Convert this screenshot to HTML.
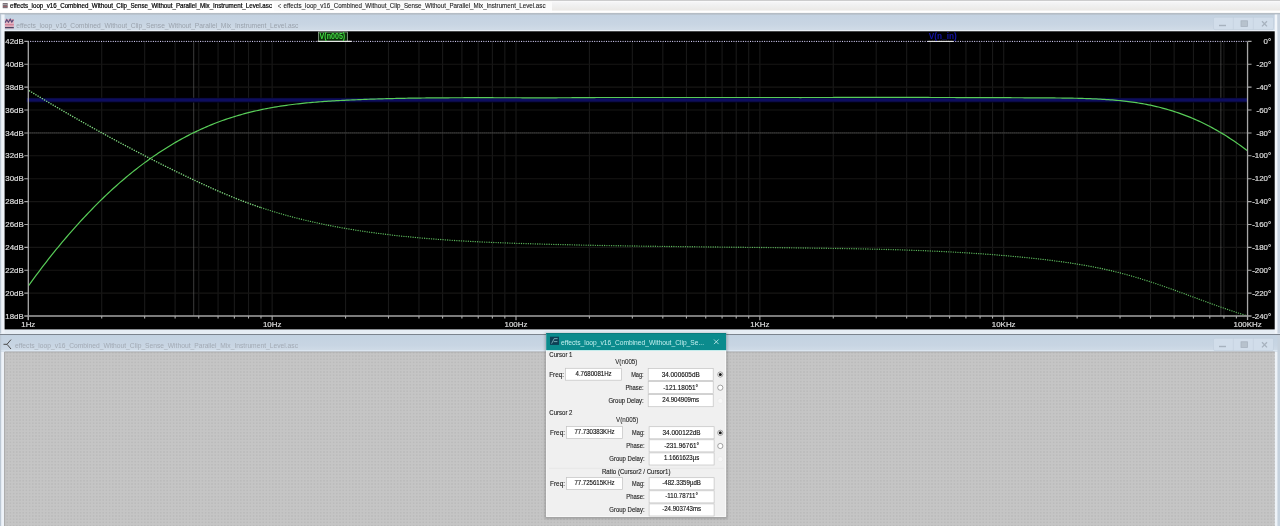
<!DOCTYPE html>
<html lang="en"><head><meta charset="utf-8"><title>LTspice</title>
<style>html,body{margin:0;padding:0;background:#c2c2c2;overflow:hidden}svg{display:block}text{opacity:0.999}</style>
</head><body>
<svg width="1280" height="526" viewBox="0 0 1280 526">
<defs>
<linearGradient id="gTitle" x1="0" y1="0" x2="0" y2="1"><stop offset="0" stop-color="#c3d2e1"/><stop offset="0.6" stop-color="#c8d5e3"/><stop offset="1" stop-color="#d2dde8"/></linearGradient>
<linearGradient id="gTab" x1="0" y1="0" x2="0" y2="1"><stop offset="0.15" stop-color="#f5f5f7"/><stop offset="0.45" stop-color="#efefef"/><stop offset="0.8" stop-color="#ebe9e6"/></linearGradient>
<linearGradient id="gTabEdge" x1="0" y1="0" x2="0" y2="1"><stop offset="0" stop-color="#f4f4f4"/><stop offset="0.3" stop-color="#b4bcc4"/><stop offset="0.7" stop-color="#b9c3cd"/><stop offset="1" stop-color="#c3d2e1"/></linearGradient>
<pattern id="dots" width="3.2" height="3.2" patternUnits="userSpaceOnUse"><rect x="0" y="0" width="1.6" height="1.6" fill="#bbbbbb"/></pattern>
<filter id="b1" x="-20%" y="-20%" width="140%" height="140%"><feGaussianBlur stdDeviation="1"/></filter>
<filter id="bl" filterUnits="userSpaceOnUse" x="0" y="90" width="1280" height="20"><feGaussianBlur stdDeviation="0 0.5"/></filter>
<filter id="b05" x="-5%" y="-50%" width="110%" height="200%"><feGaussianBlur stdDeviation="0.45"/></filter>
<filter id="b07" x="-5%" y="-50%" width="110%" height="200%"><feGaussianBlur stdDeviation="0.6"/></filter>
</defs>
<rect x="0" y="0" width="1280" height="526" fill="#c2c2c2"/>
<rect x="0" y="0" width="1280" height="13.2" fill="url(#gTab)"/>
<rect x="0" y="0" width="552" height="13" fill="#fbfbfb"/>
<rect x="0" y="0" width="274" height="13" fill="#ffffff"/>
<rect x="0" y="0.9" width="1280" height="1" fill="#fafafa"/>
<rect x="0" y="0" width="1280" height="0.9" fill="#c8c8c8"/>
<rect x="0" y="10.6" width="1280" height="2.2" fill="#ffffff"/>
<rect x="0" y="13.3" width="1280" height="321" fill="#e6edf4"/>
<rect x="0" y="13.4" width="1280" height="17.9" fill="url(#gTitle)"/>
<rect x="0" y="12.6" width="1280" height="2.6" fill="url(#gTabEdge)"/>
<rect x="3" y="30.2" width="1273.5" height="1.1" fill="#eef3f8"/>
<rect x="1" y="14.5" width="3.6" height="319" fill="#eef3f9"/>
<rect x="0" y="14.5" width="1.2" height="319" fill="#bcc8d4"/>
<rect x="1274.7" y="14.5" width="2.8" height="319" fill="#f2f6fa"/>
<rect x="1277.5" y="14.5" width="2.5" height="319" fill="#c9d4e0"/>
<rect x="4.6" y="31.3" width="1270.1" height="298.1" fill="#000"/>
<rect x="0" y="335" width="1280" height="192" fill="#e3eaf2"/>
<rect x="0" y="335" width="1280" height="17.2" fill="url(#gTitle)"/>
<rect x="0" y="334" width="1280" height="1" fill="#7c848e"/>
<rect x="0" y="350" width="1280" height="1.6" fill="#dbe6f1"/>
<rect x="1274.7" y="352" width="2.8" height="174" fill="#eef3f8"/>
<rect x="1277.5" y="335" width="2.5" height="191" fill="#c6d2de"/>
<rect x="1" y="352" width="3.6" height="174" fill="#eef3f9"/>
<rect x="0" y="335" width="1.2" height="191" fill="#bcc8d4"/>
<rect x="4.6" y="352.2" width="1270.1" height="174" fill="#c5c5c5"/>
<rect x="4.6" y="352.2" width="1270.1" height="174" fill="url(#dots)"/>
<path d="M4.6 526 V352 H1274.7" stroke="#a8a8a8" stroke-width="1" fill="none"/>
<g font-family="'Liberation Sans', Arial, sans-serif">
<rect x="2.7" y="3" width="5" height="5.2" fill="#7a7278"/><rect x="3" y="4.3" width="4.4" height="0.7" fill="#b9b4b8"/><rect x="3" y="6" width="4.4" height="0.8" fill="#a05a62"/>
<text x="10" y="7.8" font-size="6.4" fill="#000" stroke="#000" stroke-width="0.2" textLength="262" lengthAdjust="spacingAndGlyphs">effects_loop_v16_Combined_Without_Clip_Sense_Without_Parallel_Mix_Instrument_Level.asc</text>
<path d="M281 4.2 L278 6 L281 7.8" stroke="#444" stroke-width="0.7" fill="none"/>
<text x="283.5" y="7.8" font-size="6.4" fill="#222" stroke="#222" stroke-width="0.1" textLength="262" lengthAdjust="spacingAndGlyphs">effects_loop_v16_Combined_Without_Clip_Sense_Without_Parallel_Mix_Instrument_Level.asc</text>
<g filter="url(#b05)"><rect x="4.9" y="19" width="9" height="9.6" fill="#e3b4c2"/><path d="M5.2 22.6 l1.6 -3 l1.6 2.6 l1.8 -3 l1.6 2.8 l1.6 -2.4" stroke="#5a4a78" stroke-width="1.2" fill="none"/><path d="M5 27.6 h8.8" stroke="#4c4464" stroke-width="1.3"/><path d="M5 24.8 h8.8" stroke="#c8607c" stroke-width="0.8"/></g>
<text x="16.3" y="27.6" font-size="7.6" fill="#9aa2ac" textLength="282" lengthAdjust="spacingAndGlyphs" filter="url(#b07)">effects_loop_v16_Combined_Without_Clip_Sense_Without_Parallel_Mix_Instrument_Level.asc</text>
<path d="M11 339.6 L7 344.3 L11 349 M3.5 344.3 L7 344.3" stroke="#4a4a4a" stroke-width="1" fill="none"/>
<text x="15" y="348.2" font-size="7.6" fill="#a2aab4" textLength="283" lengthAdjust="spacingAndGlyphs" filter="url(#b07)">effects_loop_v16_Combined_Without_Clip_Sense_Without_Parallel_Mix_Instrument_Level.asc</text>
</g>
<rect x="1213.5" y="17.2" width="60" height="12.4" rx="1.5" fill="#d1ddea" stroke="#c0cddb" stroke-width="0.6"/><path d="M1233.3 17.2 v12.4 M1253.3 17.2 v12.4" stroke="#c0cddb" stroke-width="0.6"/><path d="M1219 25.5 h7" stroke="#a7b2be" stroke-width="1.4"/><rect x="1241" y="20.8" width="6.4" height="5.6" fill="#b7c2cd" stroke="#a7b2be" stroke-width="0.8"/><path d="M1262 21.2 l5 5.2 m0 -5.2 l-5 5.2" stroke="#a7b2be" stroke-width="1.3"/>
<rect x="1213.5" y="338.2" width="60" height="12.4" rx="1.5" fill="#d1ddea" stroke="#c0cddb" stroke-width="0.6"/><path d="M1233.3 338.2 v12.4 M1253.3 338.2 v12.4" stroke="#c0cddb" stroke-width="0.6"/><path d="M1219 346.5 h7" stroke="#a7b2be" stroke-width="1.4"/><rect x="1241" y="341.8" width="6.4" height="5.6" fill="#b7c2cd" stroke="#a7b2be" stroke-width="0.8"/><path d="M1262 342.2 l5 5.2 m0 -5.2 l-5 5.2" stroke="#a7b2be" stroke-width="1.3"/>
<g id="plot">
<path d="M101.71 41.4 V316.0 M144.65 41.4 V316.0 M175.11 41.4 V316.0 M198.74 41.4 V316.0 M218.05 41.4 V316.0 M234.38 41.4 V316.0 M248.52 41.4 V316.0 M260.99 41.4 V316.0 M272.15 41.4 V316.0 M345.56 41.4 V316.0 M388.50 41.4 V316.0 M418.96 41.4 V316.0 M442.59 41.4 V316.0 M461.90 41.4 V316.0 M478.23 41.4 V316.0 M492.37 41.4 V316.0 M504.84 41.4 V316.0 M516.00 41.4 V316.0 M589.41 41.4 V316.0 M632.35 41.4 V316.0 M662.81 41.4 V316.0 M686.44 41.4 V316.0 M705.75 41.4 V316.0 M722.08 41.4 V316.0 M736.22 41.4 V316.0 M748.69 41.4 V316.0 M759.85 41.4 V316.0 M833.26 41.4 V316.0 M876.20 41.4 V316.0 M906.66 41.4 V316.0 M930.29 41.4 V316.0 M949.60 41.4 V316.0 M965.93 41.4 V316.0 M980.07 41.4 V316.0 M992.54 41.4 V316.0 M1003.70 41.4 V316.0 M1077.11 41.4 V316.0 M1120.05 41.4 V316.0 M1150.51 41.4 V316.0 M1174.14 41.4 V316.0 M1193.45 41.4 V316.0 M1209.78 41.4 V316.0 M1223.92 41.4 V316.0 M1236.39 41.4 V316.0" stroke="#191919" stroke-width="1.1" fill="none"/>
<path d="M28.3 64.28 H1247.55 M28.3 87.17 H1247.55 M28.3 110.05 H1247.55 M28.3 132.93 H1247.55 M28.3 155.82 H1247.55 M28.3 178.70 H1247.55 M28.3 201.58 H1247.55 M28.3 224.47 H1247.55 M28.3 247.35 H1247.55 M28.3 270.23 H1247.55 M28.3 293.12 H1247.55" stroke="#171615" stroke-width="1.1" fill="none"/>
<path d="M28.3 41.4 H1247.55" stroke="#d2ccf6" stroke-width="1.15" stroke-dasharray="0.01 2.35" stroke-linecap="round" fill="none"/>
<path d="M193.71 41.4 V316.0 M1220.87 41.4 V316.0 M28.3 132.93 H1247.55" stroke="#646464" stroke-width="1" stroke-dasharray="1.2 0.8" fill="none"/>
<path d="M26.5 100.05 H1247.55" stroke="#06062a" stroke-width="4.8" fill="none" filter="url(#bl)"/>
<path d="M27 100.05 H1247.55" stroke="#0f0f60" stroke-width="3.0" fill="none" filter="url(#bl)"/>
<polyline points="28.4,286.02 30.4,283.21 32.4,280.44 34.4,277.69 36.4,274.97 38.4,272.28 40.4,269.61 42.4,266.97 44.4,264.36 46.4,261.77 48.4,259.21 50.4,256.67 52.4,254.16 54.4,251.67 56.4,249.21 58.4,246.77 60.4,244.36 62.4,241.97 64.4,239.60 66.4,237.26 68.4,234.93 70.4,232.63 72.4,230.35 74.4,228.10 76.4,225.86 78.4,223.65 80.4,221.45 82.4,219.28 84.4,217.13 86.4,214.99 88.4,212.88 90.4,210.79 92.4,208.73 94.4,206.68 96.4,204.66 98.4,202.66 100.4,200.68 102.4,198.73 104.4,196.79 106.4,194.89 108.4,193.00 110.4,191.14 112.4,189.30 114.4,187.48 116.4,185.69 118.4,183.91 120.4,182.16 122.4,180.44 124.4,178.73 126.4,177.05 128.4,175.38 130.4,173.75 132.4,172.13 134.4,170.53 136.4,168.96 138.4,167.40 140.4,165.87 142.4,164.36 144.4,162.88 146.4,161.41 148.4,159.96 150.4,158.54 152.4,157.13 154.4,155.75 156.4,154.39 158.4,153.05 160.4,151.73 162.4,150.43 164.4,149.15 166.4,147.89 168.4,146.65 170.4,145.43 172.4,144.23 174.4,143.05 176.4,141.89 178.4,140.76 180.4,139.64 182.4,138.54 184.4,137.46 186.4,136.40 188.4,135.36 190.4,134.34 192.4,133.33 194.4,132.35 196.4,131.39 198.4,130.44 200.4,129.52 202.4,128.61 204.4,127.72 206.4,126.85 208.4,126.00 210.4,125.17 212.4,124.36 214.4,123.56 216.4,122.78 218.4,122.02 220.4,121.28 222.4,120.56 224.4,119.85 226.4,119.16 228.4,118.49 230.4,117.84 232.4,117.20 234.4,116.57 236.4,115.97 238.4,115.38 240.4,114.80 242.4,114.24 244.4,113.70 246.4,113.17 248.4,112.65 250.4,112.15 252.4,111.66 254.4,111.19 256.4,110.73 258.4,110.29 260.4,109.85 262.4,109.43 264.4,109.02 266.4,108.63 268.4,108.25 270.4,107.87 272.4,107.51 274.4,107.17 276.4,106.83 278.4,106.50 280.4,106.19 282.4,105.88 284.4,105.59 286.4,105.30 288.4,105.03 290.4,104.76 292.4,104.51 294.4,104.26 296.4,104.02 298.4,103.79 300.4,103.57 302.4,103.35 304.4,103.15 306.4,102.95 308.4,102.76 310.4,102.57 312.4,102.40 314.4,102.23 316.4,102.06 318.4,101.90 320.4,101.75 322.4,101.60 324.4,101.46 326.4,101.33 328.4,101.19 330.4,101.07 332.4,100.94 334.4,100.83 336.4,100.71 338.4,100.60 340.4,100.49 342.4,100.39 344.4,100.29 346.4,100.19 348.4,100.09 350.4,100.00 352.4,99.91 354.4,99.82 356.4,99.73 358.4,99.65 360.4,99.57 362.4,99.49 364.4,99.41 366.4,99.33 368.4,99.26 370.4,99.19 372.4,99.12 374.4,99.05 376.4,98.99 378.4,98.93 380.4,98.87 382.4,98.81 384.4,98.75 386.4,98.70 388.4,98.64 390.4,98.59 392.4,98.54 394.4,98.50 396.4,98.45 398.4,98.41 400.4,98.36 402.4,98.32 404.4,98.28 406.4,98.25 408.4,98.21 410.4,98.18 412.4,98.14 414.4,98.11 416.4,98.08 418.4,98.05 420.4,98.03 422.4,98.00 424.4,97.98 426.4,97.95 428.4,97.93 430.4,97.91 432.4,97.89 434.4,97.88 436.4,97.86 438.4,97.84 440.4,97.83 442.4,97.81 444.4,97.80 446.4,97.79 448.4,97.78 450.4,97.77 452.4,97.76 454.4,97.75 456.4,97.74 458.4,97.74 460.4,97.73 462.4,97.73 464.4,97.72 466.4,97.72 468.4,97.72 470.4,97.72 472.4,97.71 474.4,97.71 476.4,97.71 478.4,97.71 480.4,97.71 482.4,97.71 484.4,97.71 486.4,97.72 488.4,97.72 490.4,97.72 492.4,97.72 494.4,97.73 496.4,97.73 498.4,97.73 500.4,97.74 502.4,97.74 504.4,97.74 506.4,97.75 508.4,97.75 510.4,97.76 512.4,97.76 514.4,97.76 516.4,97.77 518.4,97.77 520.4,97.77 522.4,97.78 524.4,97.78 526.4,97.78 528.4,97.79 530.4,97.79 532.4,97.79 534.4,97.79 536.4,97.79 538.4,97.79 540.4,97.79 542.4,97.79 544.4,97.79 546.4,97.79 548.4,97.79 550.4,97.79 552.4,97.79 554.4,97.78 556.4,97.78 558.4,97.77 560.4,97.77 562.4,97.76 564.4,97.75 566.4,97.75 568.4,97.74 570.4,97.73 572.4,97.72 574.4,97.70 576.4,97.69 578.4,97.68 580.4,97.66 582.4,97.65 584.4,97.63 586.4,97.61 588.4,97.59 590.4,97.57 592.4,97.55 594.4,97.53 596.4,97.50 598.4,97.48 600.4,97.50 602.4,97.50 604.4,97.50 606.4,97.50 608.4,97.50 610.4,97.50 612.4,97.50 614.4,97.50 616.4,97.50 618.4,97.50 620.4,97.50 622.4,97.50 624.4,97.50 626.4,97.50 628.4,97.50 630.4,97.50 632.4,97.50 634.4,97.50 636.4,97.50 638.4,97.50 640.4,97.50 642.4,97.50 644.4,97.50 646.4,97.50 648.4,97.50 650.4,97.50 652.4,97.50 654.4,97.50 656.4,97.50 658.4,97.50 660.4,97.50 662.4,97.50 664.4,97.50 666.4,97.50 668.4,97.50 670.4,97.50 672.4,97.50 674.4,97.50 676.4,97.50 678.4,97.50 680.4,97.50 682.4,97.50 684.4,97.50 686.4,97.50 688.4,97.50 690.4,97.50 692.4,97.50 694.4,97.50 696.4,97.50 698.4,97.50 700.4,97.50 702.4,97.50 704.4,97.50 706.4,97.50 708.4,97.50 710.4,97.50 712.4,97.50 714.4,97.50 716.4,97.50 718.4,97.50 720.4,97.50 722.4,97.50 724.4,97.50 726.4,97.50 728.4,97.50 730.4,97.50 732.4,97.50 734.4,97.50 736.4,97.50 738.4,97.50 740.4,97.50 742.4,97.50 744.4,97.50 746.4,97.50 748.4,97.50 750.4,97.50 752.4,97.50 754.4,97.50 756.4,97.50 758.4,97.50 760.4,97.50 762.4,97.50 764.4,97.50 766.4,97.50 768.4,97.50 770.4,97.50 772.4,97.50 774.4,97.50 776.4,97.50 778.4,97.50 780.4,97.50 782.4,97.50 784.4,97.50 786.4,97.50 788.4,97.50 790.4,97.50 792.4,97.50 794.4,97.50 796.4,97.50 798.4,97.50 800.4,97.53 802.4,97.52 804.4,97.52 806.4,97.52 808.4,97.51 810.4,97.51 812.4,97.51 814.4,97.50 816.4,97.50 818.4,97.50 820.4,97.49 822.4,97.49 824.4,97.49 826.4,97.48 828.4,97.48 830.4,97.48 832.4,97.48 834.4,97.47 836.4,97.47 838.4,97.47 840.4,97.47 842.4,97.46 844.4,97.46 846.4,97.46 848.4,97.46 850.4,97.46 852.4,97.46 854.4,97.45 856.4,97.45 858.4,97.45 860.4,97.45 862.4,97.45 864.4,97.45 866.4,97.45 868.4,97.45 870.4,97.44 872.4,97.44 874.4,97.44 876.4,97.44 878.4,97.44 880.4,97.44 882.4,97.44 884.4,97.44 886.4,97.44 888.4,97.44 890.4,97.44 892.4,97.44 894.4,97.45 896.4,97.45 898.4,97.45 900.4,97.45 902.4,97.45 904.4,97.45 906.4,97.45 908.4,97.45 910.4,97.45 912.4,97.46 914.4,97.46 916.4,97.46 918.4,97.46 920.4,97.46 922.4,97.47 924.4,97.47 926.4,97.47 928.4,97.47 930.4,97.48 932.4,97.48 934.4,97.48 936.4,97.49 938.4,97.49 940.4,97.49 942.4,97.50 944.4,97.50 946.4,97.51 948.4,97.51 950.4,97.51 952.4,97.52 954.4,97.52 956.4,97.53 958.4,97.53 960.4,97.54 962.4,97.54 964.4,97.55 966.4,97.55 968.4,97.56 970.4,97.57 972.4,97.57 974.4,97.58 976.4,97.58 978.4,97.59 980.4,97.60 982.4,97.60 984.4,97.61 986.4,97.62 988.4,97.63 990.4,97.63 992.4,97.64 994.4,97.65 996.4,97.66 998.4,97.66 1000.4,97.67 1002.4,97.68 1004.4,97.69 1006.4,97.70 1008.4,97.71 1010.4,97.72 1012.4,97.73 1014.4,97.73 1016.4,97.74 1018.4,97.75 1020.4,97.76 1022.4,97.77 1024.4,97.78 1026.4,97.80 1028.4,97.81 1030.4,97.82 1032.4,97.83 1034.4,97.84 1036.4,97.85 1038.4,97.86 1040.4,97.87 1042.4,97.89 1044.4,97.90 1046.4,97.91 1048.4,97.92 1050.4,97.94 1052.4,97.95 1054.4,97.97 1056.4,97.98 1058.4,98.00 1060.4,98.02 1062.4,98.04 1064.4,98.07 1066.4,98.09 1068.4,98.12 1070.4,98.15 1072.4,98.19 1074.4,98.23 1076.4,98.27 1078.4,98.32 1080.4,98.37 1082.4,98.43 1084.4,98.49 1086.4,98.55 1088.4,98.62 1090.4,98.70 1092.4,98.78 1094.4,98.87 1096.4,98.96 1098.4,99.06 1100.4,99.17 1102.4,99.28 1104.4,99.40 1106.4,99.53 1108.4,99.67 1110.4,99.81 1112.4,99.97 1114.4,100.13 1116.4,100.30 1118.4,100.48 1120.4,100.68 1122.4,100.88 1124.4,101.10 1126.4,101.33 1128.4,101.57 1130.4,101.83 1132.4,102.10 1134.4,102.38 1136.4,102.68 1138.4,102.99 1140.4,103.32 1142.4,103.67 1144.4,104.03 1146.4,104.41 1148.4,104.80 1150.4,105.21 1152.4,105.64 1154.4,106.09 1156.4,106.55 1158.4,107.03 1160.4,107.53 1162.4,108.05 1164.4,108.59 1166.4,109.15 1168.4,109.72 1170.4,110.32 1172.4,110.94 1174.4,111.57 1176.4,112.23 1178.4,112.91 1180.4,113.61 1182.4,114.33 1184.4,115.07 1186.4,115.83 1188.4,116.62 1190.4,117.43 1192.4,118.26 1194.4,119.11 1196.4,119.99 1198.4,120.89 1200.4,121.82 1202.4,122.77 1204.4,123.74 1206.4,124.74 1208.4,125.77 1210.4,126.81 1212.4,127.89 1214.4,128.98 1216.4,130.11 1218.4,131.26 1220.4,132.43 1222.4,133.63 1224.4,134.85 1226.4,136.10 1228.4,137.37 1230.4,138.67 1232.4,140.00 1234.4,141.35 1236.4,142.72 1238.4,144.12 1240.4,145.55 1242.4,147.00 1244.4,148.48 1246.4,149.99 1247.5,150.87" stroke="#58cc58" stroke-width="1.2" fill="none" stroke-linejoin="round"/>
<polyline points="29.5,90.88 31.5,92.11 33.5,93.33 35.5,94.55 37.5,95.76 39.5,96.97 41.5,98.18 43.5,99.38 45.5,100.58 47.5,101.78 49.5,102.97 51.5,104.15 53.5,105.34 55.5,106.52 57.5,107.69 59.5,108.87 61.5,110.03 63.5,111.20 65.5,112.36 67.5,113.52 69.5,114.67 71.5,115.82 73.5,116.97 75.5,118.12 77.5,119.26 79.5,120.39 81.5,121.53 83.5,122.66 85.5,123.78 87.5,124.91 89.5,126.03 91.5,127.14 93.5,128.26 95.5,129.37 97.5,130.47 99.5,131.58 101.5,132.68 103.5,133.78 105.5,134.87 107.5,135.96 109.5,137.05 111.5,138.14 113.5,139.22 115.5,140.30 117.5,141.38 119.5,142.45 121.5,143.52 123.5,144.59 125.5,145.65 127.5,146.71 129.5,147.77 131.5,148.83 133.5,149.88 135.5,150.93 137.5,151.98 139.5,153.02 141.5,154.06 143.5,155.10 145.5,156.13 147.5,157.16 149.5,158.19 151.5,159.21 153.5,160.23 155.5,161.24 157.5,162.26 159.5,163.26 161.5,164.27 163.5,165.27 165.5,166.27 167.5,167.26 169.5,168.25 171.5,169.24 173.5,170.22 175.5,171.20 177.5,172.18 179.5,173.15 181.5,174.12 183.5,175.08 185.5,176.04 187.5,176.99 189.5,177.94 191.5,178.89 193.5,179.83 195.5,180.77 197.5,181.71 199.5,182.63 201.5,183.56 203.5,184.48 205.5,185.39 207.5,186.30 209.5,187.20 211.5,188.10 213.5,188.99 215.5,189.87 217.5,190.74 219.5,191.61 221.5,192.47 223.5,193.33 225.5,194.17 227.5,195.01 229.5,195.83 231.5,196.65 233.5,197.46 235.5,198.27 237.5,199.06 239.5,199.84 241.5,200.61 243.5,201.37 245.5,202.12 247.5,202.86 249.5,203.59 251.5,204.31 253.5,205.02 255.5,205.73 257.5,206.42 259.5,207.10 261.5,207.77" stroke="#7ed67e" stroke-width="1.5" stroke-dasharray="0.01 2.5" stroke-linecap="round" fill="none"/>
<polyline points="261.5,207.77 263.5,208.43 265.5,209.08 267.5,209.72 269.5,210.36 271.5,210.98 273.5,211.59 275.5,212.20 277.5,212.80 279.5,213.39 281.5,213.96 283.5,214.54 285.5,215.10 287.5,215.65 289.5,216.20 291.5,216.73 293.5,217.26 295.5,217.78 297.5,218.29 299.5,218.80 301.5,219.29 303.5,219.78 305.5,220.26 307.5,220.74 309.5,221.20 311.5,221.66 313.5,222.11 315.5,222.56 317.5,222.99 319.5,223.42 321.5,223.85 323.5,224.26 325.5,224.67 327.5,225.07 329.5,225.47 331.5,225.86 333.5,226.24 335.5,226.62 337.5,226.99 339.5,227.35 341.5,227.71 343.5,228.06 345.5,228.41 347.5,228.75 349.5,229.08 351.5,229.41 353.5,229.74 355.5,230.06 357.5,230.37 359.5,230.68 361.5,230.98 363.5,231.28 365.5,231.57 367.5,231.86 369.5,232.14 371.5,232.42 373.5,232.69 375.5,232.96 377.5,233.23 379.5,233.49 381.5,233.74 383.5,233.99 385.5,234.24 387.5,234.48 389.5,234.72 391.5,234.96 393.5,235.19 395.5,235.41 397.5,235.63 399.5,235.85 401.5,236.07 403.5,236.28 405.5,236.48 407.5,236.68 409.5,236.88 411.5,237.08 413.5,237.27 415.5,237.46 417.5,237.64 419.5,237.82 421.5,238.00 423.5,238.17 425.5,238.34 427.5,238.51 429.5,238.67 431.5,238.83 433.5,238.99 435.5,239.15 437.5,239.30 439.5,239.44 441.5,239.59 443.5,239.73 445.5,239.87 447.5,240.01 449.5,240.14 451.5,240.27 453.5,240.40 455.5,240.52 457.5,240.65 459.5,240.77 461.5,240.88 463.5,241.00 465.5,241.11 467.5,241.22 469.5,241.33 471.5,241.44 473.5,241.54 475.5,241.64 477.5,241.74 479.5,241.84 481.5,241.93 483.5,242.03 485.5,242.12 487.5,242.21 489.5,242.29 491.5,242.38 493.5,242.46 495.5,242.54 497.5,242.63 499.5,242.70 501.5,242.78 503.5,242.86 505.5,242.93 507.5,243.00 509.5,243.08 511.5,243.15 513.5,243.22 515.5,243.28 517.5,243.35 519.5,243.42 521.5,243.48 523.5,243.54 525.5,243.61 527.5,243.67 529.5,243.73 531.5,243.79 533.5,243.85 535.5,243.90 537.5,243.96 539.5,244.02 541.5,244.07 543.5,244.13 545.5,244.18 547.5,244.24 549.5,244.29 551.5,244.34 553.5,244.40 555.5,244.45 557.5,244.50 559.5,244.55 561.5,244.60 563.5,244.64 565.5,244.69 567.5,244.74 569.5,244.79 571.5,244.83 573.5,244.88 575.5,244.92 577.5,244.97 579.5,245.01 581.5,245.05 583.5,245.09 585.5,245.14 587.5,245.18 589.5,245.22 591.5,245.26 593.5,245.30 595.5,245.34 597.5,245.38 599.5,245.41 601.5,245.45 603.5,245.49 605.5,245.53 607.5,245.56 609.5,245.60 611.5,245.63 613.5,245.67 615.5,245.70 617.5,245.74 619.5,245.77 621.5,245.80 623.5,245.83 625.5,245.87 627.5,245.90 629.5,245.93 631.5,245.96 633.5,245.99 635.5,246.02 637.5,246.05 639.5,246.08 641.5,246.11 643.5,246.14 645.5,246.17 647.5,246.19 649.5,246.22 651.5,246.25 653.5,246.28 655.5,246.30 657.5,246.33 659.5,246.36 661.5,246.38 663.5,246.41 665.5,246.43 667.5,246.46 669.5,246.48 671.5,246.51 673.5,246.53 675.5,246.56 677.5,246.58 679.5,246.60 681.5,246.63 683.5,246.65 685.5,246.67 687.5,246.70 689.5,246.72 691.5,246.74 693.5,246.76 695.5,246.79 697.5,246.81 699.5,246.83 701.5,246.85 703.5,246.87 705.5,246.90 707.5,246.92 709.5,246.94 711.5,246.96 713.5,246.98 715.5,247.00 717.5,247.02 719.5,247.05 721.5,247.07 723.5,247.09 725.5,247.11 727.5,247.13 729.5,247.15 731.5,247.17 733.5,247.19 735.5,247.21 737.5,247.23 739.5,247.25 741.5,247.28 743.5,247.30 745.5,247.32 747.5,247.34 749.5,247.36 751.5,247.38 753.5,247.40 755.5,247.42 757.5,247.44 759.5,247.47 761.5,247.49 763.5,247.51 765.5,247.53 767.5,247.55 769.5,247.57 771.5,247.60 773.5,247.62 775.5,247.64 777.5,247.66 779.5,247.69 781.5,247.71 783.5,247.73 785.5,247.76 787.5,247.78 789.5,247.80 791.5,247.83 793.5,247.85 795.5,247.87 797.5,247.90 799.5,247.92 801.5,247.95 803.5,247.97 805.5,248.00 807.5,248.03 809.5,248.05 811.5,248.08 813.5,248.10 815.5,248.13 817.5,248.16 819.5,248.19 821.5,248.21 823.5,248.24 825.5,248.27 827.5,248.30 829.5,248.33 831.5,248.36 833.5,248.39 835.5,248.42 837.5,248.45 839.5,248.48 841.5,248.52 843.5,248.55 845.5,248.58 847.5,248.62 849.5,248.65 851.5,248.69 853.5,248.72 855.5,248.76 857.5,248.80 859.5,248.84 861.5,248.88 863.5,248.92 865.5,248.96 867.5,249.00 869.5,249.05 871.5,249.09 873.5,249.14 875.5,249.18 877.5,249.23 879.5,249.28 881.5,249.33 883.5,249.38 885.5,249.43 887.5,249.48 889.5,249.54 891.5,249.59 893.5,249.65 895.5,249.71 897.5,249.77 899.5,249.83 901.5,249.89 903.5,249.95 905.5,250.02 907.5,250.09 909.5,250.15 911.5,250.22 913.5,250.29 915.5,250.37 917.5,250.44 919.5,250.52 921.5,250.59 923.5,250.67 925.5,250.75 927.5,250.84 929.5,250.92 931.5,251.01 933.5,251.09 935.5,251.18 937.5,251.28 939.5,251.37 941.5,251.46 943.5,251.56 945.5,251.66 947.5,251.76 949.5,251.86 951.5,251.97 953.5,252.08 955.5,252.19 957.5,252.30 959.5,252.41 961.5,252.53 963.5,252.64 965.5,252.76 967.5,252.89 969.5,253.01 971.5,253.14 973.5,253.27 975.5,253.40 977.5,253.53 979.5,253.67 981.5,253.81 983.5,253.95 985.5,254.09 987.5,254.24 989.5,254.39 991.5,254.54 993.5,254.69 995.5,254.85 997.5,255.01 999.5,255.17 1001.5,255.34 1003.5,255.50 1005.5,255.67 1007.5,255.85 1009.5,256.02 1011.5,256.20 1013.5,256.38 1015.5,256.57 1017.5,256.75 1019.5,256.94 1021.5,257.14 1023.5,257.33 1025.5,257.53 1027.5,257.73 1029.5,257.94 1031.5,258.15 1033.5,258.36 1035.5,258.57 1037.5,258.79 1039.5,259.01 1041.5,259.24 1043.5,259.46 1045.5,259.70 1047.5,259.93 1049.5,260.17 1051.5,260.42 1053.5,260.67 1055.5,260.92 1057.5,261.18 1059.5,261.45 1061.5,261.72 1063.5,261.99 1065.5,262.28 1067.5,262.56 1069.5,262.86 1071.5,263.16 1073.5,263.46 1075.5,263.78 1077.5,264.10 1079.5,264.43 1081.5,264.76 1083.5,265.10 1085.5,265.45 1087.5,265.81 1089.5,266.18 1091.5,266.55 1093.5,266.93 1095.5,267.32 1097.5,267.72 1099.5,268.13 1101.5,268.55 1103.5,268.98 1105.5,269.41 1107.5,269.86 1109.5,270.32 1111.5,270.78 1113.5,271.26 1115.5,271.75 1117.5,272.24 1119.5,272.75 1121.5,273.27 1123.5,273.80 1125.5,274.34 1127.5,274.89 1129.5,275.45 1131.5,276.02 1133.5,276.60 1135.5,277.19 1137.5,277.79 1139.5,278.40 1141.5,279.02 1143.5,279.64 1145.5,280.27 1147.5,280.91 1149.5,281.56 1151.5,282.21 1153.5,282.88 1155.5,283.54 1157.5,284.22 1159.5,284.90 1161.5,285.59 1163.5,286.28 1165.5,286.98 1167.5,287.68 1169.5,288.39 1171.5,289.10 1173.5,289.82 1175.5,290.54 1177.5,291.26 1179.5,291.99 1181.5,292.72 1183.5,293.46 1185.5,294.19 1187.5,294.93 1189.5,295.67 1191.5,296.41 1193.5,297.15 1195.5,297.89 1197.5,298.63 1199.5,299.37 1201.5,300.11 1203.5,300.85 1205.5,301.58 1207.5,302.31 1209.5,303.04 1211.5,303.77 1213.5,304.50 1215.5,305.22 1217.5,305.93 1219.5,306.64 1221.5,307.35 1223.5,308.05 1225.5,308.74 1227.5,309.43 1229.5,310.12 1231.5,310.79 1233.5,311.46 1235.5,312.12 1237.5,312.77 1239.5,313.41 1241.5,314.05 1243.5,314.67 1245.5,315.28 1247.5,315.89" stroke="#5cb85c" stroke-width="1.35" stroke-dasharray="0.01 2.3" stroke-linecap="round" fill="none"/>
<path d="M28.3 41.4 V320.0 M1247.55 41.4 V320.0" stroke="#a8a8a8" stroke-width="1.3" fill="none"/>
<path d="M24.3 316.0 H1251.55" stroke="#a4a4a4" stroke-width="1.5" fill="none"/>
<path d="M24.3 41.40 H28.3 M1247.55 41.40 H1251.55 M24.3 64.28 H28.3 M1247.55 64.28 H1251.55 M24.3 87.17 H28.3 M1247.55 87.17 H1251.55 M24.3 110.05 H28.3 M1247.55 110.05 H1251.55 M24.3 132.93 H28.3 M1247.55 132.93 H1251.55 M24.3 155.82 H28.3 M1247.55 155.82 H1251.55 M24.3 178.70 H28.3 M1247.55 178.70 H1251.55 M24.3 201.58 H28.3 M1247.55 201.58 H1251.55 M24.3 224.47 H28.3 M1247.55 224.47 H1251.55 M24.3 247.35 H28.3 M1247.55 247.35 H1251.55 M24.3 270.23 H28.3 M1247.55 270.23 H1251.55 M24.3 293.12 H28.3 M1247.55 293.12 H1251.55 M28.30 316.0 v4.2 M101.71 316.0 v2.4 M144.65 316.0 v2.4 M175.11 316.0 v2.4 M198.74 316.0 v2.4 M218.05 316.0 v2.4 M234.38 316.0 v2.4 M248.52 316.0 v2.4 M260.99 316.0 v2.4 M272.15 316.0 v4.2 M345.56 316.0 v2.4 M388.50 316.0 v2.4 M418.96 316.0 v2.4 M442.59 316.0 v2.4 M461.90 316.0 v2.4 M478.23 316.0 v2.4 M492.37 316.0 v2.4 M504.84 316.0 v2.4 M516.00 316.0 v4.2 M589.41 316.0 v2.4 M632.35 316.0 v2.4 M662.81 316.0 v2.4 M686.44 316.0 v2.4 M705.75 316.0 v2.4 M722.08 316.0 v2.4 M736.22 316.0 v2.4 M748.69 316.0 v2.4 M759.85 316.0 v4.2 M833.26 316.0 v2.4 M876.20 316.0 v2.4 M906.66 316.0 v2.4 M930.29 316.0 v2.4 M949.60 316.0 v2.4 M965.93 316.0 v2.4 M980.07 316.0 v2.4 M992.54 316.0 v2.4 M1003.70 316.0 v4.2 M1077.11 316.0 v2.4 M1120.05 316.0 v2.4 M1150.51 316.0 v2.4 M1174.14 316.0 v2.4 M1193.45 316.0 v2.4 M1209.78 316.0 v2.4 M1223.92 316.0 v2.4 M1236.39 316.0 v2.4" stroke="#a8a8a8" stroke-width="1.1" fill="none"/>
<g font-family="'Liberation Sans', Arial, sans-serif" font-size="7.9" fill="#dadada" stroke="#dadada" stroke-width="0.22">
<text x="23.700000000000003" y="44.00" text-anchor="end">42dB</text>
<text x="1271.1" y="44.00" text-anchor="end">0°</text>
<text x="23.700000000000003" y="66.88" text-anchor="end">40dB</text>
<text x="1271.1" y="66.88" text-anchor="end">-20°</text>
<text x="23.700000000000003" y="89.77" text-anchor="end">38dB</text>
<text x="1271.1" y="89.77" text-anchor="end">-40°</text>
<text x="23.700000000000003" y="112.65" text-anchor="end">36dB</text>
<text x="1271.1" y="112.65" text-anchor="end">-60°</text>
<text x="23.700000000000003" y="135.53" text-anchor="end">34dB</text>
<text x="1271.1" y="135.53" text-anchor="end">-80°</text>
<text x="23.700000000000003" y="158.42" text-anchor="end">32dB</text>
<text x="1271.1" y="158.42" text-anchor="end">-100°</text>
<text x="23.700000000000003" y="181.30" text-anchor="end">30dB</text>
<text x="1271.1" y="181.30" text-anchor="end">-120°</text>
<text x="23.700000000000003" y="204.18" text-anchor="end">28dB</text>
<text x="1271.1" y="204.18" text-anchor="end">-140°</text>
<text x="23.700000000000003" y="227.07" text-anchor="end">26dB</text>
<text x="1271.1" y="227.07" text-anchor="end">-160°</text>
<text x="23.700000000000003" y="249.95" text-anchor="end">24dB</text>
<text x="1271.1" y="249.95" text-anchor="end">-180°</text>
<text x="23.700000000000003" y="272.83" text-anchor="end">22dB</text>
<text x="1271.1" y="272.83" text-anchor="end">-200°</text>
<text x="23.700000000000003" y="295.72" text-anchor="end">20dB</text>
<text x="1271.1" y="295.72" text-anchor="end">-220°</text>
<text x="23.700000000000003" y="318.60" text-anchor="end">18dB</text>
<text x="1271.1" y="318.60" text-anchor="end">-240°</text>
<text x="28.30" y="327.4" text-anchor="middle">1Hz</text>
<text x="272.15" y="327.4" text-anchor="middle">10Hz</text>
<text x="516.00" y="327.4" text-anchor="middle">100Hz</text>
<text x="759.85" y="327.4" text-anchor="middle">1KHz</text>
<text x="1003.70" y="327.4" text-anchor="middle">10KHz</text>
<text x="1247.55" y="327.4" text-anchor="middle">100KHz</text>
</g>
<rect x="318.5" y="32" width="29" height="9.4" fill="#0a300a" stroke="#a9b8a9" stroke-width="0.7"/>
<path d="M317.6 41.4 H351.5" stroke="#e6e6e6" stroke-width="1.1"/>
<text x="319.6" y="39" font-family="'Liberation Sans', Arial, sans-serif" font-size="8.8" font-weight="bold" fill="#44dd44" textLength="25.6" lengthAdjust="spacingAndGlyphs">V(n005)</text>
<path d="M928 41.4 H953" stroke="#e4e4e4" stroke-width="1.1"/>
<text x="928.8" y="39.2" font-family="'Liberation Sans', Arial, sans-serif" font-size="8.8" font-weight="bold" fill="#1414a8" textLength="28" lengthAdjust="spacingAndGlyphs">V(n_in)</text>
</g>
<rect x="544.7" y="332.6" width="182.89999999999998" height="186.29999999999995" fill="#000" opacity="0.18" filter="url(#b1)"/>
<rect x="546.2" y="333.1" width="179.89999999999998" height="183.79999999999995" fill="#f0f0f0"/>
<rect x="546.2" y="333.1" width="179.89999999999998" height="17.2" fill="#0b8b8d"/>
<rect x="546.6" y="350.5" width="179.09999999999997" height="165.99999999999994" fill="none" stroke="#fbfbfb" stroke-width="0.8"/>
<rect x="546.2" y="350.0" width="179.89999999999998" height="0.9" fill="#bfeaea"/>
<g font-family="'Liberation Sans', Arial, sans-serif">
<rect x="550" y="336.7" width="9" height="8.2" fill="#0b3f55" filter="url(#b05)"/>
<path d="M551.6 343.6 l2.6 -5 h3.4 M553.8 341.6 h3.6" stroke="#9fd0d6" stroke-width="0.7" fill="none"/>
<rect x="546.2" y="333.1" width="179.89999999999998" height="0.9" fill="#0a7a7c"/>
<text x="561" y="345.2" font-size="7.6" fill="#c4f0f0" textLength="143" lengthAdjust="spacingAndGlyphs">effects_loop_v16_Combined_Without_Clip_Se...</text>
<path d="M714 339.5 l4.6 4.6 m0 -4.6 l-4.6 4.6" stroke="#eaffff" stroke-width="0.7" fill="none"/>
<text x="549.3" y="356.8" font-size="6.7" fill="#1c1c1c" text-anchor="start" textLength="23.2" lengthAdjust="spacingAndGlyphs" stroke="#1c1c1c" stroke-width="0.12">Cursor 1</text>
<text x="626.3" y="363.6" font-size="6.6" fill="#1c1c1c" text-anchor="middle" textLength="22.3" lengthAdjust="spacingAndGlyphs" stroke="#1c1c1c" stroke-width="0.06">V(n005)</text>
<text x="549.2" y="376.5" font-size="6.7" fill="#1c1c1c" text-anchor="start" textLength="14.85" lengthAdjust="spacingAndGlyphs" stroke="#1c1c1c" stroke-width="0.12">Freq:</text>
<rect x="565.6" y="368.3" width="56.0" height="11.899999999999977" fill="#fff" stroke="#c2c2c2" stroke-width="0.7"/>
<text x="593.6" y="375.5" font-size="6.6" fill="#111" text-anchor="middle" textLength="36.12" lengthAdjust="spacingAndGlyphs" stroke="#111" stroke-width="0.14">4.7680081Hz</text>
<rect x="648.2" y="368.40000000000003" width="65.0" height="12.099999999999966" fill="#fff" stroke="#c2c2c2" stroke-width="0.7"/>
<text x="643.7" y="376.6" font-size="6.7" fill="#1c1c1c" text-anchor="end" textLength="12.5" lengthAdjust="spacingAndGlyphs" stroke="#1c1c1c" stroke-width="0.12">Mag:</text>
<text x="680.7" y="376.7" font-size="6.6" fill="#111" text-anchor="middle" textLength="38.09" lengthAdjust="spacingAndGlyphs" stroke="#111" stroke-width="0.14">34.000605dB</text>
<rect x="648.2" y="381.50000000000006" width="65.0" height="12.099999999999966" fill="#fff" stroke="#c2c2c2" stroke-width="0.7"/>
<text x="643.7" y="389.70000000000005" font-size="6.7" fill="#1c1c1c" text-anchor="end" textLength="18.3" lengthAdjust="spacingAndGlyphs" stroke="#1c1c1c" stroke-width="0.12">Phase:</text>
<text x="680.7" y="389.90000000000003" font-size="6.6" fill="#111" text-anchor="middle" textLength="34.95" lengthAdjust="spacingAndGlyphs" stroke="#111" stroke-width="0.14">-121.18051°</text>
<rect x="648.2" y="394.6" width="65.0" height="12.099999999999966" fill="#fff" stroke="#c2c2c2" stroke-width="0.7"/>
<text x="643.7" y="402.8" font-size="6.7" fill="#1c1c1c" text-anchor="end" textLength="35.3" lengthAdjust="spacingAndGlyphs" stroke="#1c1c1c" stroke-width="0.12">Group Delay:</text>
<text x="680.7" y="401.7" font-size="6.6" fill="#111" text-anchor="middle" textLength="36.79" lengthAdjust="spacingAndGlyphs" stroke="#111" stroke-width="0.14">24.904909ms</text>
<circle cx="720.3" cy="374.5" r="2.6" fill="#fff" stroke="#6a6a6a" stroke-width="0.6"/>
<circle cx="720.3" cy="374.5" r="1.5" fill="#181818"/>
<circle cx="720.3" cy="387.7" r="2.6" fill="#fff" stroke="#6a6a6a" stroke-width="0.6"/>
<circle cx="720.3" cy="400.90000000000003" r="2.6" fill="#f7f7f7" stroke="#e6e6e6" stroke-width="0.6"/>
<text x="549.3" y="414.8" font-size="6.7" fill="#1c1c1c" text-anchor="start" textLength="23.2" lengthAdjust="spacingAndGlyphs" stroke="#1c1c1c" stroke-width="0.12">Cursor 2</text>
<text x="627.2" y="421.6" font-size="6.6" fill="#1c1c1c" text-anchor="middle" textLength="22.3" lengthAdjust="spacingAndGlyphs" stroke="#1c1c1c" stroke-width="0.06">V(n005)</text>
<text x="550.1" y="434.8" font-size="6.7" fill="#1c1c1c" text-anchor="start" textLength="14.85" lengthAdjust="spacingAndGlyphs" stroke="#1c1c1c" stroke-width="0.12">Freq:</text>
<rect x="566.5" y="426.6" width="56.0" height="11.899999999999977" fill="#fff" stroke="#c2c2c2" stroke-width="0.7"/>
<text x="594.5" y="433.8" font-size="6.6" fill="#111" text-anchor="middle" textLength="40.17" lengthAdjust="spacingAndGlyphs" stroke="#111" stroke-width="0.14">77.730383KHz</text>
<rect x="649.1" y="426.70000000000005" width="65.0" height="12.099999999999966" fill="#fff" stroke="#c2c2c2" stroke-width="0.7"/>
<text x="644.6" y="434.90000000000003" font-size="6.7" fill="#1c1c1c" text-anchor="end" textLength="12.5" lengthAdjust="spacingAndGlyphs" stroke="#1c1c1c" stroke-width="0.12">Mag:</text>
<text x="681.6" y="435.0" font-size="6.6" fill="#111" text-anchor="middle" textLength="38.09" lengthAdjust="spacingAndGlyphs" stroke="#111" stroke-width="0.14">34.000122dB</text>
<rect x="649.1" y="439.80000000000007" width="65.0" height="12.099999999999966" fill="#fff" stroke="#c2c2c2" stroke-width="0.7"/>
<text x="644.6" y="448.00000000000006" font-size="6.7" fill="#1c1c1c" text-anchor="end" textLength="18.3" lengthAdjust="spacingAndGlyphs" stroke="#1c1c1c" stroke-width="0.12">Phase:</text>
<text x="681.6" y="448.20000000000005" font-size="6.6" fill="#111" text-anchor="middle" textLength="34.95" lengthAdjust="spacingAndGlyphs" stroke="#111" stroke-width="0.14">-231.96761°</text>
<rect x="649.1" y="452.90000000000003" width="65.0" height="12.099999999999966" fill="#fff" stroke="#c2c2c2" stroke-width="0.7"/>
<text x="644.6" y="461.1" font-size="6.7" fill="#1c1c1c" text-anchor="end" textLength="35.3" lengthAdjust="spacingAndGlyphs" stroke="#1c1c1c" stroke-width="0.12">Group Delay:</text>
<text x="681.6" y="460.0" font-size="6.6" fill="#111" text-anchor="middle" textLength="35.23" lengthAdjust="spacingAndGlyphs" stroke="#111" stroke-width="0.14">1.1661623µs</text>
<circle cx="720.3" cy="432.8" r="2.6" fill="#fff" stroke="#6a6a6a" stroke-width="0.6"/>
<circle cx="720.3" cy="432.8" r="1.5" fill="#181818"/>
<circle cx="720.3" cy="446.0" r="2.6" fill="#fff" stroke="#6a6a6a" stroke-width="0.6"/>
<circle cx="720.3" cy="459.20000000000005" r="2.6" fill="#f7f7f7" stroke="#e6e6e6" stroke-width="0.6"/>
<path d="M549 468.3 H724" stroke="#e0e0e0" stroke-width="0.6"/>
<text x="636.2" y="473.6" font-size="6.7" fill="#1c1c1c" text-anchor="middle" textLength="68.5" lengthAdjust="spacingAndGlyphs" stroke="#1c1c1c" stroke-width="0.12">Ratio (Cursor2 / Cursor1)</text>
<text x="550.1" y="485.8" font-size="6.7" fill="#1c1c1c" text-anchor="start" textLength="14.85" lengthAdjust="spacingAndGlyphs" stroke="#1c1c1c" stroke-width="0.12">Freq:</text>
<rect x="566.5" y="477.6" width="56.0" height="11.899999999999977" fill="#fff" stroke="#c2c2c2" stroke-width="0.7"/>
<text x="594.5" y="484.8" font-size="6.6" fill="#111" text-anchor="middle" textLength="40.17" lengthAdjust="spacingAndGlyphs" stroke="#111" stroke-width="0.14">77.725615KHz</text>
<rect x="649.1" y="477.70000000000005" width="65.0" height="12.099999999999966" fill="#fff" stroke="#c2c2c2" stroke-width="0.7"/>
<text x="644.6" y="485.90000000000003" font-size="6.7" fill="#1c1c1c" text-anchor="end" textLength="12.5" lengthAdjust="spacingAndGlyphs" stroke="#1c1c1c" stroke-width="0.12">Mag:</text>
<text x="681.6" y="484.90000000000003" font-size="6.6" fill="#111" text-anchor="middle" textLength="38.69" lengthAdjust="spacingAndGlyphs" stroke="#111" stroke-width="0.14">-482.3359µdB</text>
<rect x="649.1" y="490.80000000000007" width="65.0" height="12.099999999999966" fill="#fff" stroke="#c2c2c2" stroke-width="0.7"/>
<text x="644.6" y="499.00000000000006" font-size="6.7" fill="#1c1c1c" text-anchor="end" textLength="18.3" lengthAdjust="spacingAndGlyphs" stroke="#1c1c1c" stroke-width="0.12">Phase:</text>
<text x="681.6" y="498.00000000000006" font-size="6.6" fill="#111" text-anchor="middle" textLength="32.6" lengthAdjust="spacingAndGlyphs" stroke="#111" stroke-width="0.14">-110.78711°</text>
<rect x="649.1" y="503.90000000000003" width="65.0" height="12.099999999999966" fill="#fff" stroke="#c2c2c2" stroke-width="0.7"/>
<text x="644.6" y="512.1" font-size="6.7" fill="#1c1c1c" text-anchor="end" textLength="35.3" lengthAdjust="spacingAndGlyphs" stroke="#1c1c1c" stroke-width="0.12">Group Delay:</text>
<text x="681.6" y="511.0" font-size="6.6" fill="#111" text-anchor="middle" textLength="38.82" lengthAdjust="spacingAndGlyphs" stroke="#111" stroke-width="0.14">-24.903743ms</text>
</g>
</svg>
</body></html>
